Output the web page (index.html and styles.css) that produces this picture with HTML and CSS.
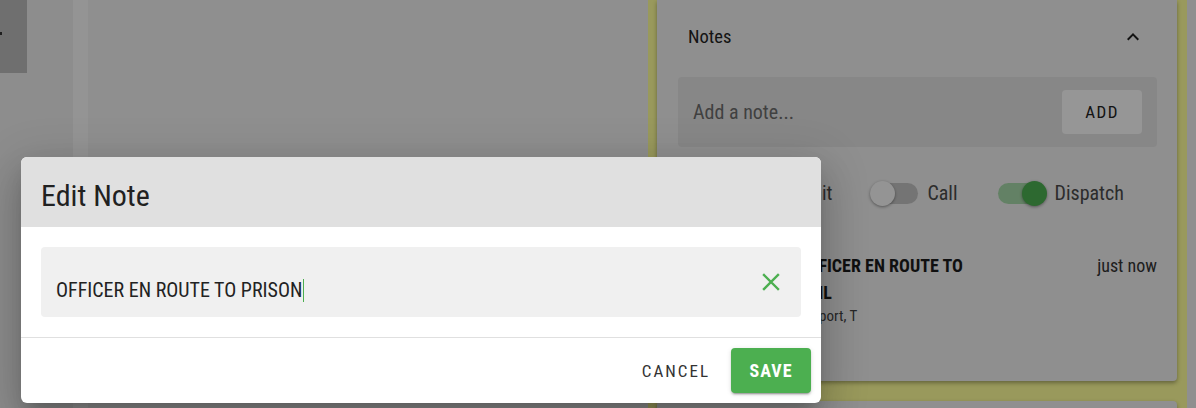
FILE: index.html
```html
<!DOCTYPE html>
<html>
<head>
<meta charset="utf-8">
<link rel="stylesheet" href="styles.css">
</head>
<body>
<div class="app">
  <aside class="rail">
    <div class="rail-tab"><span class="rail-dot"></span></div>
  </aside>
  <div class="stripe"></div>
  <main class="main"></main>
  <div class="gap"></div>
  <section class="notes-col">
    <div class="card">
      <div class="notes-head">
        <span class="notes-title">Notes</span>
        <svg class="chev" width="24" height="24" viewBox="0 0 24 24"><path d="M7.4 15.4 12 10.8l4.6 4.6L18 14l-6-6-6 6z" fill="#1f1f1f"/></svg>
      </div>
      <div class="add-field">
        <span class="placeholder">Add a note...</span>
        <button class="add-btn">ADD</button>
      </div>
      <div class="toggles">
        <div class="toggle"><span class="tlabel">Unit</span></div>
        <div class="toggle"><span class="track"><span class="thumb"></span></span><span class="tlabel">Call</span></div>
        <div class="toggle on"><span class="track"><span class="thumb"></span></span><span class="tlabel">Dispatch</span></div>
      </div>
      <div class="note-item">
        <div class="note-text">
          <div class="note-title">OFFICER EN ROUTE TO<br>JAIL</div>
          <div class="note-sub">Newport, T</div>
        </div>
        <div class="note-time">just now</div>
      </div>
    </div>
    <div class="card card-next"></div>
  </section>
  <div class="edge"></div>
</div>

<div class="overlay"></div>

<div class="dialog">
  <div class="dialog-head">Edit Note</div>
  <div class="dialog-body">
    <div class="field">
      <span class="field-text">OFFICER EN ROUTE TO PRISON<span class="caret"></span></span>
      <svg class="clear" width="24" height="24" viewBox="0 0 24 24"><path d="M5 5 19 19M19 5 5 19" stroke="#4caf50" stroke-width="2.4" stroke-linecap="square" fill="none"/></svg>
    </div>
  </div>
  <div class="dialog-foot">
    <button class="btn-text">CANCEL</button>
    <button class="btn-save">SAVE</button>
  </div>
</div>
</body>
</html>
```
FILE: styles.css
```css
html, body {
  margin: 0;
  padding: 0;
}
body {
  width: 1196px;
  height: 408px;
  overflow: hidden;
  position: relative;
  background: #eeeeee;
  font-family: "Roboto Condensed", Roboto, "Liberation Sans", sans-serif;
  font-stretch: 87.5%;
  color: #212121;
}
button {
  font-family: inherit;
  font-stretch: inherit;
  border: none;
  cursor: pointer;
}
.app {
  display: flex;
  height: 408px;
  overflow: hidden;
}
.rail {
  width: 73px;
  background: #ececec;
}
.rail-tab {
  width: 27px;
  height: 73px;
  background: #b9b9b9;
  position: relative;
}
.rail-dot {
  position: absolute;
  left: -2px;
  top: 32px;
  width: 4px;
  height: 3px;
  background: #333;
}
.stripe {
  width: 15px;
  background: #f7f7f7;
}
.main {
  width: 544px;
  background: #eeeeee;
}
.gap {
  width: 16px;
  background: #efefef;
}
.notes-col {
  width: 520px;
  height: 408px;
  overflow: hidden;
  background: #ffff99;
  padding: 0 10px 0 9px;
  display: flex;
  flex-direction: column;
  gap: 20px;
}
.edge {
  flex: 1;
  background: #eeeeee;
}
.card {
  background: #eeeeee;
  border-radius: 0 0 4px 4px;
  box-shadow: 0 2px 4px rgba(0,0,0,0.35);
  height: 381px;
  padding: 0 20px 0 21px;
  box-sizing: border-box;
  flex-shrink: 0;
}
.card-next {
  border-radius: 4px;
  height: 40px;
}
.notes-head {
  height: 77px;
  display: flex;
  align-items: center;
  justify-content: space-between;
  padding: 0 12px 3px 10px;
  box-sizing: border-box;
}
.notes-title {
  font-size: 18.5px;
  color: #222;
}
.chev {
  display: block;
}
.add-field {
  height: 70px;
  background: #e2e2e2;
  border-radius: 4px;
  display: flex;
  align-items: center;
  justify-content: space-between;
  padding: 0 15px;
}
.placeholder {
  font-size: 20px;
  color: #6c6c6c;
}
.add-btn {
  width: 80px;
  height: 44px;
  border-radius: 4px;
  background: #fafafa;
  font-size: 17px;
  letter-spacing: 1.5px;
  color: #222;
}
.toggles {
  height: 92px;
  display: flex;
  align-items: center;
  padding-left: 123px;
}
.toggle {
  display: flex;
  align-items: center;
  gap: 9px;
  margin-right: 40px;
}
.toggle:first-child {
  margin-right: 38px;
}
.tlabel {
  font-size: 20px;
  color: #4a4a4a;
}
.track {
  width: 48px;
  height: 21px;
  border-radius: 11px;
  background: #c2c2c2;
  position: relative;
  display: block;
}
.thumb {
  position: absolute;
  left: 0;
  top: -2px;
  width: 25px;
  height: 25px;
  border-radius: 50%;
  background: #f7f7f7;
  box-shadow: 0 1px 3px rgba(0,0,0,0.4);
}
.toggle.on .track {
  background: #a6d7a8;
}
.toggle.on .thumb {
  left: auto;
  right: -1px;
  background: #4caf50;
}
.note-item {
  display: flex;
  justify-content: space-between;
  padding: 13px 0 0 121px;
}
.note-title {
  font-size: 18px;
  font-weight: 700;
  line-height: 27px;
  color: #1c1c1c;
}
.note-sub {
  font-size: 15px;
  color: #444;
  margin-top: 1px;
  text-indent: -6px;
}
.note-time {
  font-size: 18px;
  line-height: 27px;
  color: #333;
}
.overlay {
  position: absolute;
  inset: 0;
  background: rgba(0,0,0,0.4);
}
.dialog {
  position: absolute;
  left: 21px;
  top: 157px;
  width: 800px;
  height: 246px;
  background: #fff;
  border-radius: 6px;
  overflow: hidden;
  box-shadow: 0 11px 15px -7px rgba(0,0,0,0.2), 0 24px 38px 3px rgba(0,0,0,0.14), 0 9px 46px 8px rgba(0,0,0,0.12);
  display: flex;
  flex-direction: column;
}
.dialog-head {
  height: 70px;
  background: #e0e0e0;
  display: flex;
  align-items: center;
  padding: 6px 20px 0;
  box-sizing: border-box;
  font-size: 30px;
  color: #212121;
  flex-shrink: 0;
}
.dialog-body {
  padding: 20px;
  border-bottom: 1px solid #e0e0e0;
}
.field {
  height: 70px;
  background: #f0f0f0;
  border-radius: 4px;
  display: flex;
  align-items: center;
  justify-content: space-between;
  padding: 0 18px 0 15px;
  box-sizing: border-box;
}
.field-text {
  font-size: 20px;
  color: #222;
  padding-top: 16px;
  display: flex;
  align-items: center;
}
.caret {
  display: inline-block;
  width: 1px;
  height: 23px;
  background: #4caf50;
  margin-left: 1px;
}
.clear {
  display: block;
}
.dialog-foot {
  flex: 1;
  display: flex;
  justify-content: flex-end;
  align-items: center;
  padding: 0 10px;
  gap: 11px;
}
.btn-text {
  background: transparent;
  font-size: 17px;
  letter-spacing: 2px;
  color: #333;
  height: 45px;
  padding: 0 10px;
}
.btn-save {
  width: 80px;
  height: 45px;
  background: #4caf50;
  color: #fff;
  border-radius: 4px;
  font-size: 18px;
  font-weight: 700;
  letter-spacing: 1px;
  box-shadow: 0 3px 1px -2px rgba(0,0,0,0.2), 0 2px 2px 0 rgba(0,0,0,0.14), 0 1px 5px 0 rgba(0,0,0,0.12);
}
```
